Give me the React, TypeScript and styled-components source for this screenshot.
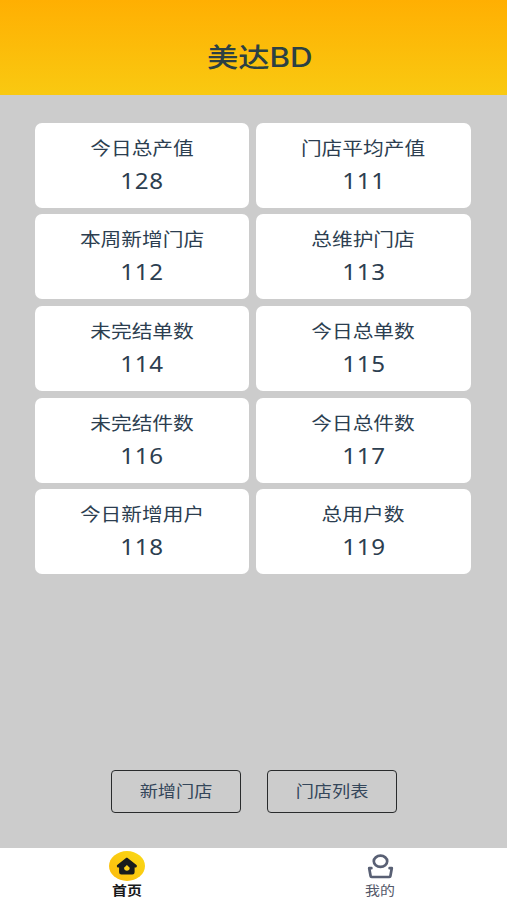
import React from "react";
import styled, { createGlobalStyle } from "styled-components";

const GlobalStyle = createGlobalStyle`
  * { box-sizing: border-box; }
  body {
    margin: 0;
    background: #cccccc;
    font-family: "Noto Sans", "Noto Sans CJK SC", sans-serif;
    color: #2c3e50;
  }
`;

const Page = styled.div`
  width: 100%;
  height: 900px;
  display: flex;
  flex-direction: column;
  overflow: hidden;
`;

const Header = styled.header`
  height: 94.5px;
  flex: none;
  padding: 20px 0 0 12px;
  display: flex;
  align-items: center;
  justify-content: center;
  background: linear-gradient(#ffaf02, #f9c911);
`;

const Wide = styled.span`
  display: block;
  white-space: nowrap;
  transform: scaleX(1.15);
`;

const Title = styled(Wide)`
  margin: 0;
  font-size: 26.5px;
  line-height: 38px;
  font-weight: 500;
  font-family: Inter, "Noto Sans CJK SC", sans-serif;
  color: #2b4044;
  transform: scaleX(1.18);
`;

const Main = styled.main`
  flex: 1;
  display: flex;
  flex-direction: column;
  justify-content: space-between;
  padding: 28px 36.5px 35px 34.5px;
`;

const Stats = styled.section`
  display: grid;
  grid-template-columns: 1fr 1fr;
  grid-auto-rows: 85px;
  gap: 6.7px 7.5px;
`;

const Card = styled.article`
  display: flex;
  flex-direction: column;
  align-items: center;
  padding-top: 8px;
  border-radius: 7px;
  background: #fff;
`;

const Label = styled(Wide)`
  font-size: 18px;
  line-height: 32px;
  font-family: "Noto Sans CJK SC", sans-serif;
`;

const Value = styled(Wide)`
  padding-left: 1px;
  font-size: 21px;
  line-height: 36px;
  letter-spacing: 0.6px;
`;

const Actions = styled.div`
  display: flex;
  justify-content: center;
  gap: 26px;
  padding-left: 3px;
`;

const ActionButton = styled.button`
  width: 130px;
  height: 43px;
  padding: 0 0 1px;
  border: 1.5px solid #292b2c;
  border-radius: 4px;
  background: transparent;
  color: #34465a;
  font: 15.8px/38px "Noto Sans CJK SC", sans-serif;
`;

const TabBar = styled.nav`
  height: 52px;
  flex: none;
  display: grid;
  grid-template-columns: 1fr 1fr;
  background: #fff;
`;

const Tab = styled.a<{ $active?: boolean }>`
  display: flex;
  flex-direction: column;
  align-items: center;
  padding-top: 3px;
  font: ${({ $active }) => ($active ? 700 : 400)} 13px/16px "Noto Sans CJK SC", sans-serif;
  color: ${({ $active }) => ($active ? "#17191b" : "#55596a")};

  svg { display: block; }
`;

const stats = [
  ["今日总产值", 128],
  ["门店平均产值", 111],
  ["本周新增门店", 112],
  ["总维护门店", 113],
  ["未完结单数", 114],
  ["今日总单数", 115],
  ["未完结件数", 116],
  ["今日总件数", 117],
  ["今日新增用户", 118],
  ["总用户数", 119],
] as const;

const HomeIcon = () => (
  <svg width="38" height="31" viewBox="0 0 38 31">
    <defs>
      <linearGradient id="homeFill" x1="0" y1="1" x2="1" y2="0">
        <stop offset="0" stopColor="#fbb90c" />
        <stop offset="1" stopColor="#fadb16" />
      </linearGradient>
    </defs>
    <ellipse cx="19" cy="15" rx="18" ry="15" fill="url(#homeFill)" />
    <path
      d="M18.8 7.5 28 14.6v1h-2.2v5.6q0 1.5-1.5 1.5H13.4q-1.5 0-1.5-1.5v-5.6H9.7v-1Z"
      fill="#181b1d"
      stroke="#181b1d"
      strokeWidth="1.6"
      strokeLinejoin="round"
    />
    <path d="m18.9 14 2.3 2.3q1.1 1.2 0 2.5-2.3 1.8-4.6 0-1.1-1.3 0-2.5Z" fill="#fbd01a" />
  </svg>
);

const UserIcon = () => (
  <svg width="38" height="31" viewBox="0 0 38 31" fill="none" stroke="#596074" strokeWidth="2.7" strokeLinejoin="round" strokeLinecap="round">
    <ellipse cx="19.5" cy="10.3" rx="6.7" ry="5.6" />
    <path d="M10.4 17.2H8.2l1.4 7.9q.1.9 1.1.9h17.6q1 0 1.1-.9l1.4-7.9h-2.2" />
  </svg>
);

export default function App() {
  return (
    <>
      <GlobalStyle />
      <Page>
        <Header>
          <Title as="h1">美达BD</Title>
        </Header>
        <Main>
          <Stats>
            {stats.map(([label, value]) => (
              <Card key={label}>
                <Label>{label}</Label>
                <Value>{value}</Value>
              </Card>
            ))}
          </Stats>
          <Actions>
            <ActionButton><Wide>新增门店</Wide></ActionButton>
            <ActionButton><Wide>门店列表</Wide></ActionButton>
          </Actions>
        </Main>
        <TabBar>
          <Tab $active><HomeIcon /><Wide>首页</Wide></Tab>
          <Tab><UserIcon /><Wide>我的</Wide></Tab>
        </TabBar>
      </Page>
    </>
  );
}
